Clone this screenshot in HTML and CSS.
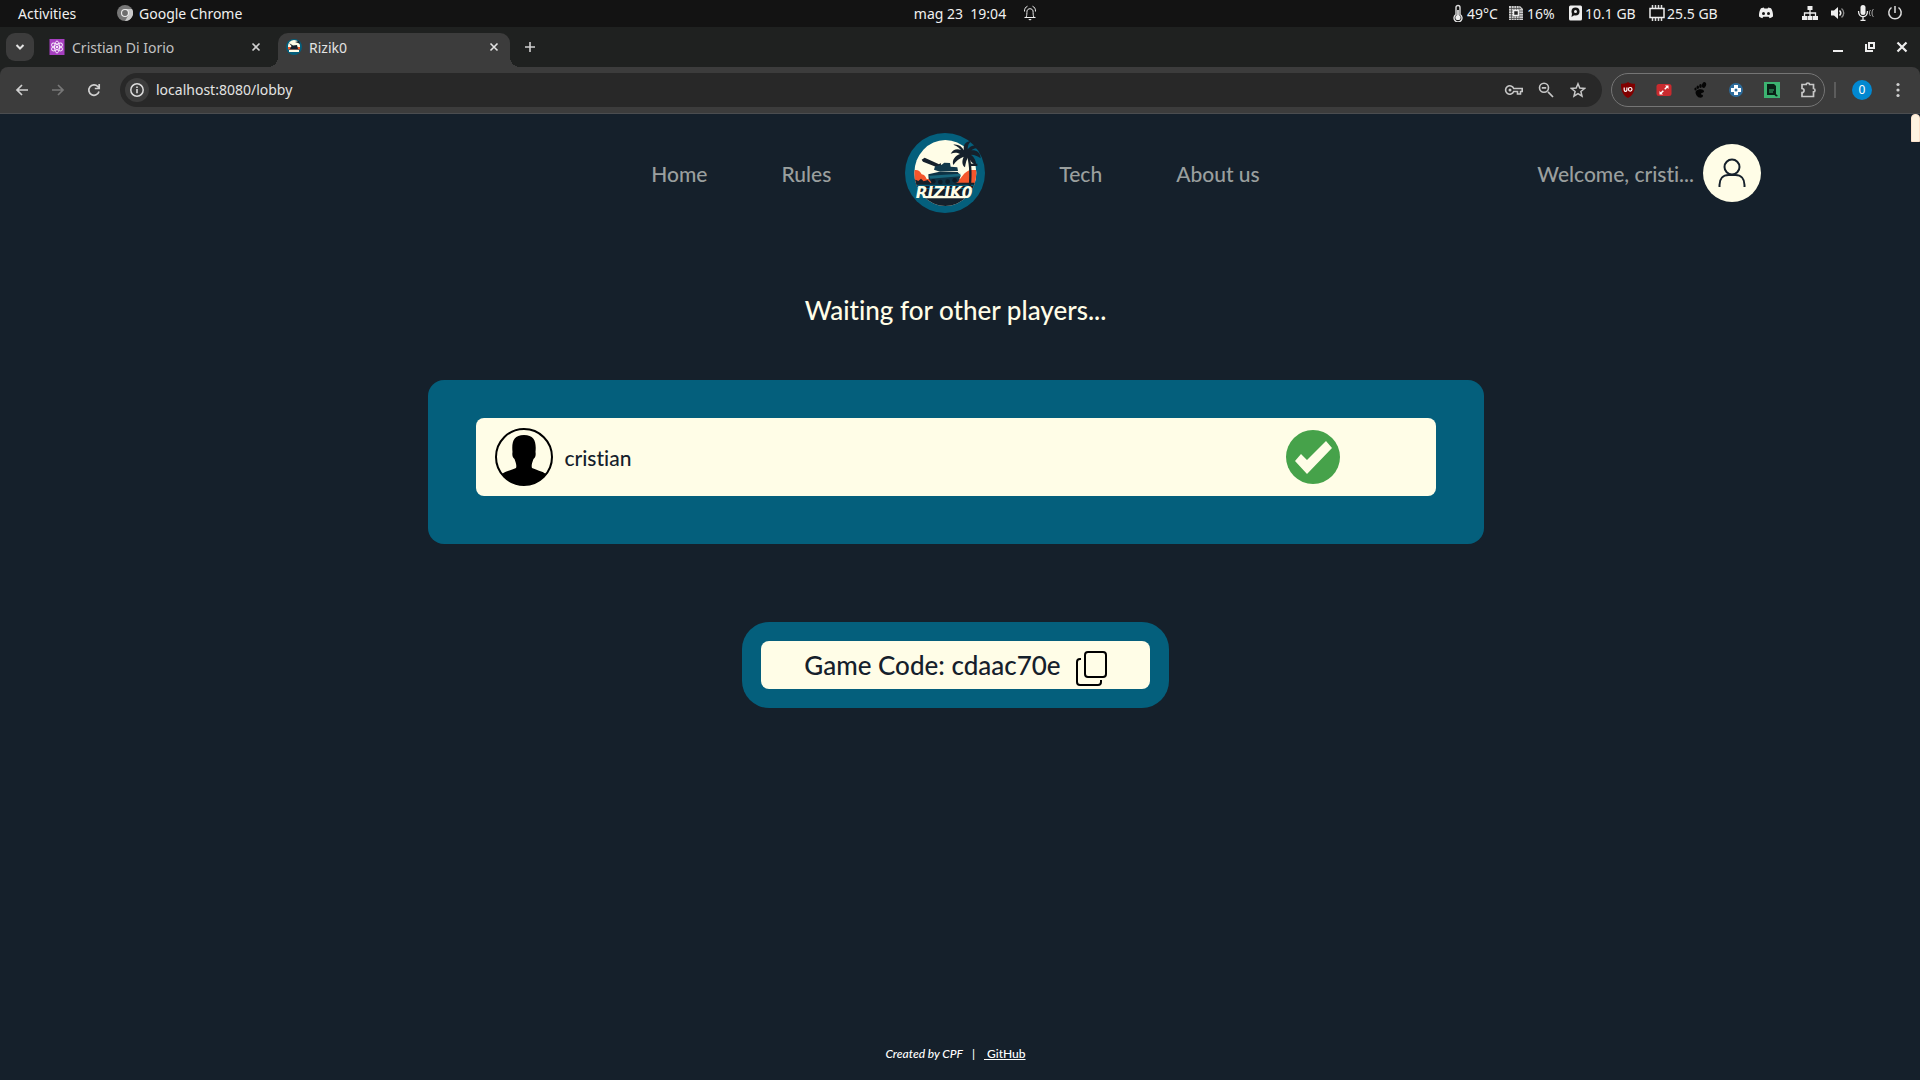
FILE: index.html
```html
<!DOCTYPE html>
<html lang="en">
<head>
<meta charset="utf-8">
<title>Rizik0</title>
<link rel="stylesheet" href="styles.css">
</head>
<body>
<div class="system-bar">
  <div class="system-left">
    <span class="activities">Activities</span>
    <svg class="icon16" viewBox="0 0 16 16"><circle cx="8" cy="8" r="8" fill="#777"/><path d="M8 4h7a8 8 0 0 1-7 12l3.500-6z" fill="#c9c9c9"/><circle cx="8" cy="8" r="4" fill="#eee"/><circle cx="8" cy="8" r="2.900" fill="#6d6d6d"/></svg>
    <span>Google Chrome</span>
  </div>
  <div class="clock">
    <span>mag 23&nbsp; 19:04</span>
    <svg class="icon16" viewBox="0 0 16 16" fill="none" stroke="#eee"><path d="M2.500 12.500h11M4.200 12c.8-1.500.6-4 .8-6 .3-3 5.700-3 6 0 .2 2 0 4.500.8 6M2.500 6.500C2.300 4 3.500 2 5.500 1.200M13.500 6.500c.2-2.500-1-4.500-3-5.300"/><path d="M6.200 14h3.600L8 15.600z" fill="#eee" stroke="none"/></svg>
  </div>
  <div class="status">
    <span class="metric"><svg width="12" height="18" viewBox="0 0 12 18"><path d="M4 3.500a2 2 0 0 1 4 0v7a4 4 0 1 1-4 0z" fill="none" stroke="#ddd" stroke-width="1.400"/><circle cx="6" cy="13.500" r="2.600" fill="#eee"/><path d="M6 6v7" stroke="#eee" stroke-width="1.600"/></svg>49°C</span>
    <span class="metric"><svg class="icon16" viewBox="0 0 16 16"><path d="M1 1h11l3 3v11H1z" fill="#ccc"/><path d="M1 3.500h12M1 6h14M1 8.500h14M1 11h14M1 13.500h14M3.500 1v14M6 1v14M8.500 1v14M11 1v14" stroke="#444" stroke-width=".7"/><path d="M5.500 5.500h5v5h-5z" fill="#222" stroke="#eee" stroke-width="1.500"/></svg>16%</span>
    <span class="metric"><svg width="13" height="16" viewBox="0 0 13 16"><rect width="13" height="15" y=".5" rx="1.500" fill="#eee"/><circle cx="6.500" cy="6.500" r="4" fill="#131313"/><circle cx="6.500" cy="6.500" r="1.500" fill="#eee"/><path d="M3 8.500 2.500 12l3-2z" fill="#131313"/></svg>10.1 GB</span>
    <span class="metric chip"><svg class="icon16" viewBox="0 0 16 16"><path d="M3.500 0v16M6.500 0v16M9.500 0v16M12.500 0v16" stroke="#ddd" stroke-width="1.500"/><rect x="1" y="3.500" width="14" height="9" fill="#131313" stroke="#eee" stroke-width="1.500"/></svg>25.5 GB</span>
    <svg class="icon16" viewBox="0 0 16 16"><path d="M3 3.200 5.800 2.500l.6 1h3.200l.6-1L13 3.200c1.500 2.400 2.200 5 2 8.300-1 .9-2.100 1.400-3.300 1.700l-1-1.500H5.300l-1 1.500C3.100 12.900 2 12.400 1 11.500c-.2-3.300.5-5.900 2-8.300z" fill="#eee"/><circle cx="5.500" cy="8.500" r="1.500" fill="#131313"/><circle cx="10.500" cy="8.500" r="1.500" fill="#131313"/></svg>
    <svg class="icon16" viewBox="0 0 16 16" fill="#eee"><path d="M5.500 1h5v4h-5zM0 11h5v4H0zM5.500 11h5v4h-5zM11 11h5v4h-5z"/><path d="M8 5v6M2.500 11V8h11v3" fill="none" stroke="#eee" stroke-width="1.300"/></svg>
    <svg class="icon16" viewBox="0 0 16 16" fill="none" stroke="#eee"><path d="M1 5.500h3L8 2v12L4 10.500H1z" fill="#eee" stroke="none"/><path d="M9.500 5.500c1.500 1.500 1.500 3.500 0 5" stroke-width="1.600"/><path d="M11.500 3.500c3 2.500 3 6.500 0 9" stroke="#888" stroke-width="1.400"/></svg>
    <svg width="18" height="16" viewBox="0 0 18 16" fill="none" stroke="#eee"><rect x="3.500" y="0" width="5" height="10" rx="2.500" fill="#eee" stroke="none"/><path d="M1.500 6c0 7.500 9 7.500 9 0M6 11.500V16M3.500 15.500h5" stroke-width="1.300"/><path d="M13.500 5c-1.500 1.500-1.500 4.500 0 6M16.500 4c-2 2-2 6 0 8" stroke="#aaa"/></svg>
    <svg class="icon16" viewBox="0 0 16 16" fill="none" stroke="#ddd" stroke-width="1.500"><path d="M8 1v7M4.500 2.500a6.200 6.200 0 1 0 7 0"/></svg>
  </div>
</div>

<div class="tab-strip">
  <button class="tab-search" aria-label="Search tabs"><svg width="10" height="10" viewBox="0 0 10 10"><path d="M1.500 3 5 6.500 8.500 3" fill="none" stroke="#e3e3e3" stroke-width="2"/></svg></button>
  <div class="tab">
    <svg class="icon16" viewBox="0 0 16 16"><rect x=".5" width="15" height="16" fill="#a63fc0"/><g fill="none" stroke="#f5e6fa"><ellipse cx="8" cy="8" rx="2.500" ry="6"/><ellipse cx="8" cy="8" rx="2.500" ry="6" transform="rotate(60 8 8)"/><ellipse cx="8" cy="8" rx="2.500" ry="6" transform="rotate(120 8 8)"/></g><circle cx="8" cy="8" r="1.300" fill="#f5e6fa"/></svg>
    <span class="tab-title">Cristian Di Iorio</span>
    <button class="tab-close" aria-label="Close tab"><svg width="10" height="10" viewBox="0 0 10 10"><path d="m1.500 1.500 7 7m0-7-7 7" stroke="#d0d0d0" stroke-width="1.600"/></svg></button>
  </div>
  <div class="tab active">
    <svg class="icon16" viewBox="0 0 16 16"><circle cx="8" cy="8" r="8" fill="#045f7c"/><path d="M2 7a6 6 0 0 1 12 0v2H2z" fill="#fffde7"/><path d="M2 8h12v2.500H2z" fill="#f05a2a"/><path d="m3 4 4 2.500 4-.5 1 4H4L5.500 7zM9 3l4-1 1 3-2-1z" fill="#15202b"/><path d="M3 11h10v2H3z" fill="#fffde7"/></svg>
    <span class="tab-title">Rizik0</span>
    <button class="tab-close" aria-label="Close tab"><svg width="10" height="10" viewBox="0 0 10 10"><path d="m1.500 1.500 7 7m0-7-7 7" stroke="#e3e3e3" stroke-width="1.600"/></svg></button>
  </div>
  <button class="new-tab" aria-label="New tab"><svg width="12" height="12" viewBox="0 0 12 12"><path d="M6 1v10M1 6h10" stroke="#d0d0d0" stroke-width="1.600"/></svg></button>
  <div class="window-controls">
    <button aria-label="Minimize"><svg width="12" height="12" viewBox="0 0 12 12"><path d="M1 10h10" stroke="#eee" stroke-width="2"/></svg></button>
    <button aria-label="Restore"><svg width="12" height="12" viewBox="0 0 12 12" fill="none" stroke="#eee" stroke-width="2"><path d="M5 2h5v5H5zM2 3v7h7"/></svg></button>
    <button aria-label="Close"><svg width="12" height="12" viewBox="0 0 12 12"><path d="m1.500 1.500 9 9m0-9-9 9" stroke="#eee" stroke-width="2.200"/></svg></button>
  </div>
</div>

<div class="toolbar-back">
<div class="toolbar">
  <button class="nav-button" aria-label="Back"><svg class="icon16" viewBox="0 0 16 16"><path d="M14 8H3M8 3 3 8l5 5" fill="none" stroke="#d0d0d0" stroke-width="1.700"/></svg></button>
  <button class="nav-button" aria-label="Forward"><svg class="icon16" viewBox="0 0 16 16"><path d="M2 8h11M8 3l5 5-5 5" fill="none" stroke="#777" stroke-width="1.700"/></svg></button>
  <button class="nav-button" aria-label="Reload"><svg class="icon16" viewBox="0 0 16 16"><path d="M13 9.500A5.200 5.200 0 1 1 11.800 4.500L13 6M13.200 2v4.500H8.800" fill="none" stroke="#d0d0d0" stroke-width="1.700"/></svg></button>
  <div class="omnibox">
    <span class="site-info"><svg class="icon16" viewBox="0 0 16 16"><circle cx="8" cy="8" r="6.200" fill="none" stroke="#ddd" stroke-width="1.500"/><path d="M8 7v4.200M8 4.500v1.600" stroke="#ddd" stroke-width="1.600"/></svg></span>
    <input class="address" type="text" value="localhost:8080/lobby" aria-label="Address">
    <button class="box-icon" aria-label="Passwords"><svg width="20" height="16" viewBox="0 0 20 16"><path d="M9.700 6.500H18.200v3h-1.700v2.500h-3V9.500H9.700A4.200 4.200 0 1 1 9.700 6.500z" fill="none" stroke="#c7c7c7" stroke-width="1.600"/><circle cx="6" cy="8" r="1.500" fill="#c7c7c7"/></svg></button>
    <button class="box-icon" aria-label="Zoom"><svg class="icon16" viewBox="0 0 16 16"><path d="M10 9.800 15 15M3.800 5.800h4.400" stroke="#c7c7c7" stroke-width="1.700"/><circle cx="6" cy="5.800" r="4.500" fill="none" stroke="#c7c7c7" stroke-width="1.600"/></svg></button>
    <button class="box-icon" aria-label="Bookmark"><svg class="icon16" viewBox="0 0 16 16"><path d="m8 1.800 1.800 4.300 4.700.4-3.600 3 1.100 4.600L8 11.600l-4 2.500 1.100-4.600-3.600-3 4.700-.4z" fill="none" stroke="#c7c7c7" stroke-width="1.500"/></svg></button>
  </div>
  <div class="extensions">
    <svg class="icon16" viewBox="0 0 16 16"><path d="M8 0c2 1.500 4.500 1.800 7 1.800C15.200 9 13 13.500 8 16 3 13.500.8 9 1 1.800 3.500 1.800 6 1.500 8 0z" fill="#800000"/><path d="M4.200 5.500V8c0 1.800 2.700 1.800 2.700 0V5.500" fill="none" stroke="#fff" stroke-width="1.200"/><circle cx="10.200" cy="7.300" r="1.800" fill="none" stroke="#fff" stroke-width="1.200"/></svg>
    <svg class="icon16" viewBox="0 0 16 16"><rect x=".5" y="2" width="15" height="12" rx="2.500" fill="#c92a2e"/><path d="m4.500 11.500 7-7" stroke="#fff" stroke-width="1.500" stroke-dasharray="4 2"/><path d="M3.500 9v3.500H7zM12.500 7V3.500H9z" fill="#fff"/></svg>
    <svg class="icon16" viewBox="0 0 16 16" fill="#050505"><ellipse cx="12" cy="3" rx="2" ry="3" transform="rotate(20 12 3)"/><ellipse cx="8.500" cy="4" rx="1.300" ry="2"/><ellipse cx="5.800" cy="5.200" rx="1.200" ry="1.700"/><ellipse cx="3.500" cy="7" rx="1.100" ry="1.500"/><path d="M4 9c2-2.500 8-2.500 8 .3 0 2-3 1.200-3 2.700 0 1 2 .2 2 1.700 0 1.500-2 2.300-3.800 1.800C5 15 2.500 11 4 9z"/></svg>
    <svg class="icon16" viewBox="0 0 16 16"><circle cx="8" cy="8" r="7" fill="#2d6c9c"/><path d="M6 3h4v3h3v4h-3v3H6v-3H3V6h3z" fill="#fff"/><circle cx="8" cy="8" r="1.500" fill="#2d6c9c"/></svg>
    <svg class="icon16" viewBox="0 0 16 16"><path d="M0 0h16v16H0z" fill="#3cb371"/><path d="M3 2h7l2 2v8l2 2-2 .5-1.500-1.500H3z" fill="#092016"/><path d="M5 8h5M5 10h4" stroke="#3cb371"/></svg>
    <svg class="icon16" viewBox="0 0 16 16"><path d="M2 2.500h4.200a1.700 1.500 0 0 1 3.400 0H13.500v4a1.500 1.700 0 0 1 0 3.400v4.600H2v-4c2.700-.2 2.700-4 0-4z" fill="none" stroke="#c7c7c7" stroke-width="1.700"/></svg>
  </div>
  <span class="divider"></span>
  <button class="profile" aria-label="Profile">0</button>
  <button class="menu" aria-label="Menu"><svg class="icon16" viewBox="0 0 16 16" fill="#d0d0d0"><circle cx="8" cy="2.500" r="1.600"/><circle cx="8" cy="8" r="1.600"/><circle cx="8" cy="13.500" r="1.600"/></svg></button>
</div>
</div>

<div class="viewport">
<div class="page">
  <header class="site-header">
    <nav class="site-nav">
      <a href="#">Home</a>
      <a href="#">Rules</a>
      <a href="#" class="logo" aria-label="Rizik0">
        <svg viewBox="0 0 240 240">
          <defs><clipPath id="disc"><ellipse cx="121" cy="120" rx="93" ry="99"/></clipPath></defs>
          <circle cx="120" cy="120" r="120" fill="#045f7c"/>
          <g clip-path="url(#disc)">
            <path d="M0 0h240v240H0z" fill="#fffde7"/>
            <path d="M20 160v-45c12-8 24-5 30 9 8 1 12 7 15 14h100c8-10 15-22 30-27h30v49z" fill="#f4562c"/>
            <path d="M20 148l12-8 8 4 8-7 8 8 12-4 8 8h145v40H20z" fill="#15202b"/>
            <path d="M40 196h164v44H40z" fill="#15202b"/>
            <path d="M0 155h240v4H0zM0 165h240v3H0z" fill="#045f7c"/>
          </g>
          <path d="m50 80 9-6 43 20 5-4 2 12-9 2-46-18z" fill="#15202b"/>
          <path d="M90 100l20-5 8-6 17 1 2 11 20 2 2 11-54 2-18-6z" fill="#12394b"/>
          <path d="m70 124 30-7h58l9 11-7 18-14 8H84l-13-16z" fill="#0d3244"/>
          <path d="m72 128 94-6v8l-90 7z" fill="#17657b"/>
          <g fill="#0b1b27"><circle cx="85" cy="145" r="7"/><circle cx="106" cy="147" r="7"/><circle cx="128" cy="146" r="7"/><circle cx="149" cy="142" r="7"/></g>
          <path d="M184 62c8 25 11 55 7 98h7c4-44 1-73-6-100z" fill="#15202b"/>
          <path d="M181 60c-16-15-34-16-44 2 13-5 20-3 28 1-15 6-25 18-20 33 8-13 18-20 31-25-6 14-5 25 4 32 2-14 5-24 10-32 5 12 12 21 23 25 1-13-5-22-14-31 10 1 18 3 28 11-1-18-12-25-28-24 8-6 16-8 25-7-11-12-27-8-36 4 0-11 3-18 11-24-17-2-26 12-22 27-7-12-17-19-32-17 13 5 21 11 27 22z" fill="#15202b"/>
          <path d="M195 92h22v7h-22z" fill="#15202b"/>
          <text class="logo-text" x="32" y="194">RIZIK0</text>
        </svg>
      </a>
      <a href="#">Tech</a>
      <a href="#">About us</a>
    </nav>
    <div class="user">
      <span class="welcome">Welcome, cristi...</span>
      <button class="avatar" aria-label="Account"><svg width="28" height="30" viewBox="0 0 28 30" fill="none" stroke="#15202b" stroke-width="2"><circle cx="14" cy="9" r="7.500"/><path d="M1.500 29v-2c0-6 3.500-10 9-10h7c5.500 0 9 4 9 10v2"/></svg></button>
    </div>
  </header>

  <main class="lobby">
    <h1 class="lobby-title">Waiting for other players...</h1>
    <section class="players">
      <div class="player">
        <svg class="player-picture" viewBox="0 0 58 58"><defs><clipPath id="face"><circle cx="29" cy="29" r="28"/></clipPath></defs><circle cx="29" cy="29" r="28" fill="none" stroke="#000" stroke-width="2"/><path clip-path="url(#face)" d="M7 46c4-3 10-4 14-6 1-3-.5-6-1.500-9-2-1-2.500-4-2-7-1-10 1-17 11.500-17s12.500 7 11.500 17c.5 3 0 6-2 7-1 3-2.500 6-1.500 9 4 2 10 3 14 6v14H7z"/></svg>
        <span class="player-name">cristian</span>
        <svg class="ready" viewBox="0 0 54 54"><circle cx="27" cy="27" r="27" fill="#46a24a"/><path d="m9 31 6-7 6 6 19-19 6 7-25 26z" fill="#fffde7"/></svg>
      </div>
    </section>
    <section class="code-frame">
      <div class="code">
        <span>Game Code: cdaac70e</span>
        <button class="copy" aria-label="Copy code"><svg width="32" height="36" viewBox="0 0 32 36" fill="none" stroke="#000" stroke-width="2"><rect x="10" y="2" width="21" height="25" rx="3"/><path d="M6 9H5a3 3 0 0 0-3 3v20a3 3 0 0 0 3 3h18a3 3 0 0 0 3-3v-2"/></svg></button>
      </div>
    </section>
  </main>

  <footer class="site-footer"><em>Created by CPF</em><span>|</span><a href="#">&nbsp;GitHub</a></footer>
</div>
<div class="scroll-track"><div class="scroll-thumb"></div></div>
</div>
</body>
</html>
```
FILE: styles.css
```css
* { box-sizing: border-box; }

body {
  margin: 0;
  min-height: 100vh;
  display: flex;
  flex-direction: column;
  background: #15202b;
  font-family: "Noto Sans", sans-serif;
  font-size: 14px;
  color: #f0f0f0;
}

button {
  display: flex;
  align-items: center;
  justify-content: center;
  padding: 0;
  border: 0;
  background: none;
  color: inherit;
  font: inherit;
}

svg { display: block; flex: none; }
.icon16 { width: 16px; height: 16px; }

/* Desktop bar */
.system-bar {
  height: 27px;
  display: grid;
  grid-template-columns: 1fr auto 1fr;
  align-items: center;
  padding-bottom: 1px;
  background: #131313;
}
.system-left { display: flex; align-items: center; gap: 6px; padding-left: 18px; }
.activities { width: 93px; }
.clock { display: flex; align-items: center; gap: 16px; padding-left: 32px; }
.status {
  justify-self: end;
  display: grid;
  grid-template-columns: 56px 61px 80px 109px 44px 28px 27px 30px 33px;
  align-items: center;
}
.metric { display: flex; align-items: center; gap: 3px; white-space: nowrap; }
.chip { gap: 2px; }

/* Tabs */
.tab-strip {
  height: 40px;
  display: flex;
  align-items: center;
  padding-left: 6px;
  background: #1f2120;
}
.tab-search { width: 28px; height: 28px; border-radius: 9px; background: #3c3c3c; }
.tab {
  width: 229px;
  height: 34px;
  display: flex;
  align-items: center;
  gap: 7px;
  margin-left: 15px;
  color: #c2c2c2;
}
.tab-title { flex: 1; }
.tab-close { width: 20px; height: 20px; margin-right: 12px; }
.tab.active {
  position: relative;
  width: 232px;
  margin: 6px 0 0;
  padding: 0 6px 6px 8px;
  border-radius: 10px 10px 0 0;
  background: #3c3c3c;
  color: #e3e3e3;
}
.active .tab-close { margin-right: 0; }
.tab.active::before,
.tab.active::after {
  content: "";
  position: absolute;
  bottom: 0;
  width: 10px;
  height: 10px;
}
.tab.active::before { right: 100%; background: radial-gradient(circle at 0 0, transparent 10px, #3c3c3c 10px); }
.tab.active::after { left: 100%; background: radial-gradient(circle at 100% 0, transparent 10px, #3c3c3c 10px); }
.new-tab { width: 40px; height: 28px; }
.window-controls { display: flex; margin-left: auto; padding-right: 2px; }
.window-controls button { width: 32px; height: 28px; }

/* Toolbar */
.toolbar-back { background: #1f2120; }
.toolbar {
  height: 47px;
  display: flex;
  align-items: center;
  padding: 0 6px 1px 4px;
  border-bottom: 1px solid #4b4d50;
  border-radius: 8px 8px 0 0;
  background: #3c3c3c;
}
.nav-button { width: 36px; height: 34px; }
.omnibox {
  flex: 1;
  height: 34px;
  display: flex;
  align-items: center;
  margin: 0 9px 0 8px;
  padding: 0 8px 0 5px;
  border-radius: 17px;
  background: #282828;
}
.site-info {
  width: 24px;
  height: 24px;
  display: flex;
  align-items: center;
  justify-content: center;
  border-radius: 50%;
  background: #3c3c3c;
}
.address {
  flex: 1;
  min-width: 0;
  padding: 0 7px;
  border: 0;
  outline: 0;
  background: none;
  color: #e3e3e3;
  font: inherit;
}
.box-icon { width: 32px; height: 32px; }
.extensions {
  width: 214px;
  height: 34px;
  display: flex;
  align-items: center;
  justify-content: space-between;
  padding: 0 8px;
  border: 1px solid #757575;
  border-radius: 17px;
}
.divider { width: 2px; height: 16px; margin: 0 16px 0 9px; background: #5c5c5c; }
.profile { width: 20px; height: 20px; border-radius: 50%; background: #0288d1; color: #fff; font-size: 12px; }
.menu { width: 32px; height: 32px; margin-left: 10px; }

/* Page */
.viewport {
  flex: 1;
  display: flex;
  font-family: Lato, sans-serif;
  font-weight: 500;
  font-variant-ligatures: none;
}
.page { flex: 1; display: flex; flex-direction: column; }
.scroll-track { width: 9px; }
.scroll-thumb { height: 28px; border: 1px solid #fde3cd; border-radius: 4px 4px 0 0; background: #fff3e0; }

.site-header {
  display: grid;
  grid-template-columns: 1fr auto 1fr;
  align-items: center;
  padding: 19px 0;
  color: #9a9f9e;
  font-size: 21px;
}
.site-nav { grid-column: 2; display: flex; align-items: center; gap: 74px; }
.site-nav a { color: inherit; text-decoration: none; }
.logo svg { width: 80px; height: 80px; }
.logo-text { font: italic bold 46px "DejaVu Sans", sans-serif; fill: #fffde7; }
.user { justify-self: end; display: flex; align-items: center; gap: 9px; margin-right: 150px; }
.welcome { white-space: nowrap; }
.avatar { width: 58px; height: 58px; border-radius: 50%; background: #fffde7; }

.lobby { flex: 1; display: flex; flex-direction: column; align-items: center; padding-top: 60px; }
.lobby-title { margin: 0; color: #fffde7; font-size: 26px; line-height: 36px; font-weight: 500; }
.players {
  width: 1056px;
  max-width: 92%;
  margin-top: 52px;
  padding: 38px 48px 48px;
  border-radius: 16px;
  background: #045f7c;
}
.player {
  display: flex;
  align-items: center;
  padding: 10px 96px 10px 19px;
  border-radius: 8px;
  background: #fffde7;
  color: #15202b;
}
.player-picture { width: 58px; height: 58px; }
.player-name { flex: 1; margin-left: 12px; font-size: 21px; }
.ready { width: 54px; height: 54px; }
.code-frame { margin-top: 78px; padding: 19px; border-radius: 27px; background: #045f7c; }
.code {
  height: 48px;
  display: flex;
  align-items: center;
  gap: 14px;
  padding: 0 43px;
  border-radius: 8px;
  background: #fffde7;
  color: #15202b;
  font-size: 26px;
}
.copy { padding-top: 6px; }

.site-footer { display: flex; justify-content: center; gap: 9px; padding-bottom: 18px; font-size: 12px; line-height: 16px; color: #fff; }
.site-footer a { color: inherit; }
```
